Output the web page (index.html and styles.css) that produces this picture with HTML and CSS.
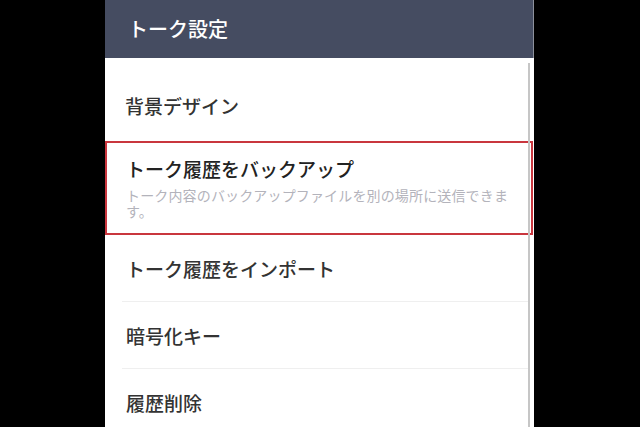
FILE: index.html
```html
<!DOCTYPE html>
<html lang="ja">
<head>
<meta charset="utf-8">
<title>トーク設定</title>
<link rel="stylesheet" href="styles.css">
</head>
<body>
<div class="phone">
  <header class="appbar"><h1 class="appbar-title">トーク設定</h1></header>
  <div class="list">
    <div class="row row-first"><span class="row-label">背景デザイン</span></div>
    <div class="row-highlight">
      <div class="hl-title">トーク履歴をバックアップ</div>
      <div class="hl-desc">トーク内容のバックアップファイルを別の場所に送信できます。</div>
    </div>
    <div class="row"><span class="row-label">トーク履歴をインポート</span></div>
    <div class="row"><span class="row-label">暗号化キー</span></div>
    <div class="row"><span class="row-label">履歴削除</span></div>
    <div class="scrollbar"></div>
  </div>
</div>
</body>
</html>
```
FILE: styles.css
```css
html, body {
  margin: 0;
  padding: 0;
  background: #000;
  height: 100%;
  overflow: hidden;
}
body {
  display: flex;
  padding-left: 105px;
  font-family: "Noto Sans CJK JP", "Noto Sans", sans-serif;
}
.phone {
  width: 429px;
  height: 427px;
  background: #fff;
  display: flex;
  flex-direction: column;
  overflow: hidden;
}
.appbar {
  height: 58px;
  flex: none;
  background: #454c61;
  display: flex;
  align-items: center;
  padding-left: 23px;
  border-right: 1px solid #8d919c;
  box-sizing: border-box;
}
.appbar-title {
  margin: 0;
  font-size: 20px;
  font-weight: 500;
  color: #fff;
  line-height: 1;
}
.list {
  position: relative;
  flex: 1;
  padding-top: 12px;
}
.row {
  height: 66px;
  margin: 0 6px 0 17px;
  padding-left: 4px;
  border-bottom: 1px solid #efefef;
  display: flex;
  align-items: center;
}
.row-first {
  height: 71px;
  border-bottom: none;
  padding-left: 3px;
}
.row-label {
  font-size: 19px;
  font-weight: 500;
  color: #333;
  line-height: 1;
}
.row-highlight {
  height: 94px;
  box-sizing: border-box;
  margin-right: 1px;
  border: 2px solid #c9363e;
  padding: 13px 17px 0 19px;
}
.hl-title {
  font-size: 19px;
  font-weight: 500;
  line-height: 26px;
  color: #222;
}
.hl-desc {
  margin-top: 5px;
  font-size: 14px;
  letter-spacing: 0.15px;
  line-height: 16px;
  color: #b3b3bb;
}
.scrollbar {
  position: absolute;
  top: 5px;
  bottom: 0;
  right: 4px;
  width: 2px;
  background: #c6c6c6;
}
```
